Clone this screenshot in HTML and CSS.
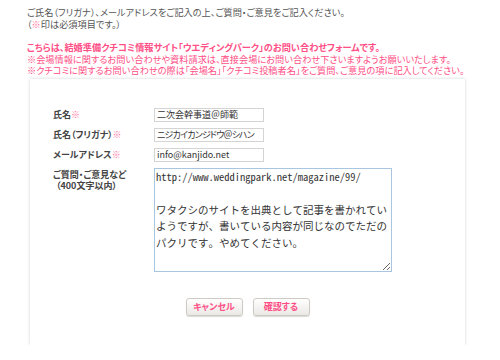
FILE: index.html
```html
<!DOCTYPE html>
<html lang="ja">
<head>
<meta charset="utf-8">
<title>お問い合わせ</title>
<link rel="stylesheet" href="styles.css">
</head>
<body>
<div id="wrap">
	<p class="lead">ご氏名（フリガナ）、メールアドレスをご記入の上、ご質問・ご意見をご記入ください。<br>（<span class="req">※</span>印は必須項目です。）</p>

	<div class="notice">
		<p class="notice-title">こちらは、結婚準備クチコミ情報サイト「ウエディングパーク」のお問い合わせフォームです。</p>
		<p>※会場情報に関するお問い合わせや資料請求は、直接会場にお問い合わせ下さいますようお願いいたします。</p>
		<p>※クチコミに関するお問い合わせの際は「会場名」「クチコミ投稿者名」をご質問、ご意見の項に記入してください。</p>
	</div>

	<div class="card">
		<div class="row">
			<label class="label">氏名<span class="req">※</span></label>
			<input class="field" type="text" value="二次会幹事道＠師範">
		</div>
		<div class="row">
			<label class="label">氏名（フリガナ）<span class="req">※</span></label>
			<input class="field kana" type="text" value="ニジカイカンジドウ＠シハン">
		</div>
		<div class="row">
			<label class="label">メールアドレス<span class="req">※</span></label>
			<input class="field" type="text" value="info@kanjido.net">
		</div>
		<div class="row row-top">
			<label class="label">ご質問・ご意見など<br><span class="sub">（400文字以内）</span></label>
			<textarea class="memo">http://www.weddingpark.net/magazine/99/

ワタクシのサイトを出典として記事を書かれてい
ようですが、書いている内容が同じなのでただの
パクリです。やめてください。</textarea>
		</div>

		<div class="btns">
			<button class="btn" type="button">キャンセル</button>
			<button class="btn" type="button">確認する</button>
		</div>
	</div>
</div>
</body>
</html>
```

FILE: styles.css
```css
*{margin:0; padding:0}
body{font-family:"Noto Sans CJK JP", sans-serif; font-size:9.2px; color:#555; background:#fff; font-feature-settings:"palt";}

#wrap{ padding:7px 0 0 27px;}
.lead{ line-height:11.5px;}
.req{ color:#ff6f9c;}

.notice{ margin-top:12px; color:#ff4f86; line-height:11.5px;}
.notice-title{ font-weight:bold;}

.card{ width:435px; height:266px; margin:2px 0 0 3px; background:#fff; box-shadow:0 0 3px rgba(0,0,0,.18); padding:29px 0 0 23px; box-sizing:border-box;}

.row{ display:flex; align-items:center; height:14px; margin-bottom:6px;}
.row-top{ align-items:flex-start; height:auto;}
.label{ width:101px; font-size:9px; font-weight:bold; color:#444; line-height:11px;}
.row-top .label{ padding-top:1px;}
.sub{ padding-left:3px;}

.field{ width:110px; height:14px; border:1px solid #d4d4d4; box-sizing:border-box; padding:0 2px; font-family:"Noto Sans CJK JP", sans-serif; font-size:9px; color:#333; outline:none; font-feature-settings:"palt";}
.kana{ letter-spacing:-0.8px;}

.memo{ width:238px; height:104px; border:1px solid #a9c6e0; box-sizing:border-box; padding:0 1px; font-family:"Noto Sans Mono CJK JP", "Liberation Mono", monospace; font-size:10.5px; line-height:16.5px; color:#333; resize:both; outline:none; font-feature-settings:normal;}

.btns{ display:flex; justify-content:center; gap:10px; margin-top:26px; padding-right:23px;}
.btn{ width:57px; height:18px; border:1px solid #cfcbc3; border-radius:3px; background:linear-gradient(#fefefe,#ebe9e6); box-shadow:0 1px 1px rgba(0,0,0,.15); color:#ff4f86; font-family:"Noto Sans CJK JP", sans-serif; font-size:9px; font-weight:bold; cursor:pointer; font-feature-settings:"palt";}
```
